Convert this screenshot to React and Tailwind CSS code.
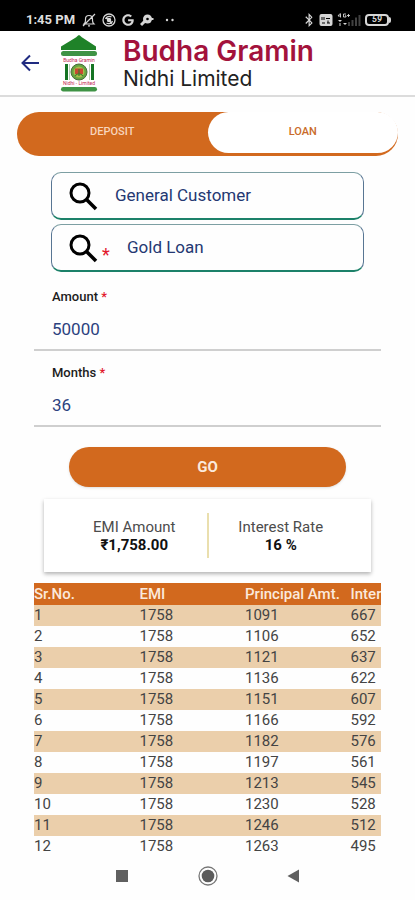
import { useState } from 'react'
import { FaBluetoothB, FaGoogle } from 'react-icons/fa'

const schedule = [
  [1, 1758, 1091, 667],
  [2, 1758, 1106, 652],
  [3, 1758, 1121, 637],
  [4, 1758, 1136, 622],
  [5, 1758, 1151, 607],
  [6, 1758, 1166, 592],
  [7, 1758, 1182, 576],
  [8, 1758, 1197, 561],
  [9, 1758, 1213, 545],
  [10, 1758, 1230, 528],
  [11, 1758, 1246, 512],
  [12, 1758, 1263, 495],
]

const StatusBar = () => (
  <div className="flex h-[31px] shrink-0 items-center bg-black px-6 pt-2 text-[#d6d6d6]">
    <span className="w-[58px] pl-0.5 text-[13px] font-bold whitespace-nowrap text-[#dedede]">1:45 PM</span>
    <div className="flex flex-1 items-center gap-1.5">
      {/* muted bell */}
      <svg className="h-3.5 w-3.5" viewBox="0 0 14 14" fill="none" stroke="currentColor" strokeWidth="1.2">
        <path d="M2 11h10c-1-1-1.500-2-1.500-3.500V6A3.500 3.500 0 0 0 7 2.500 3.500 3.500 0 0 0 3.500 6v1.500C3.500 9 3 10 2 11ZM6 12.800h2M1 13 13 1" />
      </svg>
      {/* aperture style app icon */}
      <svg className="h-3.5 w-3.5" viewBox="0 0 14 14" fill="none" stroke="currentColor" strokeWidth="1.3">
        <circle cx="7" cy="7" r="6" />
        <path d="M3.500 6A4 4 0 0 1 9.500 4M4 4.500l6 6M10.500 8a4 4 0 0 1-6 2" />
        <circle cx="7" cy="7" r="1.600" fill="currentColor" />
      </svg>
      <FaGoogle className="h-3 w-3" />
      <svg className="h-3.5 w-3.5" viewBox="0 0 14 14">
        <circle cx="7.500" cy="6" r="4.500" fill="currentColor" />
        <path d="m5 8-4 4" stroke="currentColor" strokeWidth="3" />
        <path d="M11 6h2.500" stroke="currentColor" strokeWidth="2" />
        <circle cx="7.500" cy="6" r="1.300" fill="#000" />
      </svg>
      <svg className="ml-1 h-1 w-3" viewBox="0 0 12 4" fill="currentColor">
        <circle cx="3" cy="2" r="1.200" />
        <circle cx="8.500" cy="2" r="1.200" />
      </svg>
    </div>
    <div className="flex items-center gap-1">
      <FaBluetoothB className="h-3.5 w-3" />
      <svg className="h-3 w-3.5" viewBox="0 0 14 12">
        <rect width="13" height="12" x=".5" rx="2" fill="currentColor" />
        <path d="M3 3v3M5 3v3M7 4.500h4M3 9h3M8 9h3M9 6.500V9" stroke="#000" strokeWidth="1" />
      </svg>
      {/* 4G+ signal */}
      <svg className="h-3.5 w-6" viewBox="0 0 24 14" fill="currentColor">
        <path d="M3 .5 1 3h3M3.500.5v4M9 1H6.500v3H9V2.800H8M10 2.500h3M11.500 1v3" fill="none" stroke="currentColor" strokeWidth=".9" />
        <path d="M1 7h4l-2 2zM6 10h4l-2 2z" />
        <path d="M2 10h2v3H2z" opacity=".5" />
        <path d="M11 9h2v4h-2zM14.500 7h2v6h-2zM18 4.500h2V13h-2zM21.500 2h2v11h-2z" opacity=".3" />
      </svg>
      <div className="flex items-center">
        <span className="flex h-3 w-6 items-center justify-center rounded-sm border-2 border-[#d6d6d6] text-[9px] leading-none font-bold italic">59</span>
        <span className="h-1.5 w-0.5 rounded-r bg-[#d6d6d6]" />
      </div>
    </div>
  </div>
)

const Logo = () => (
  <svg className="h-[58px] w-[38px]" viewBox="0 0 38 58">
    <path d="M19 1c2 1 2 2 4 3l13 8.500V16H1v-3.500L15 4c2-1 2-2 4-3Z" fill="#1f8228" />
    <rect x="1" y="17" width="36" height="5" rx="2.500" fill="#3f9345" />
    <rect x="1" y="53" width="36" height="4.500" rx="2.200" fill="#3f9345" />
    <path d="M5 30h3v16H5zM31 30h3v16h-3z" fill="#157423" />
    <path d="M9.500 30v16M29.500 30v16" stroke="#b8cdb6" strokeWidth="1" />
    <circle cx="19" cy="38" r="8" fill="#65a541" stroke="#496d3a" strokeWidth="1" />
    <circle cx="19" cy="38" r="5.500" fill="#a6bd4b" />
    <path d="M15 34.500h8V40h-8z" fill="#c94932" />
    <path d="M15 42c2-3 6-3 8 0M19 35v7" fill="none" stroke="#3e7b2c" strokeWidth="1.200" />
    <text x="19" y="28" textAnchor="middle" fontSize="5" fill="#c3264f">Budha Gramin</text>
    <text x="19" y="51" textAnchor="middle" fontSize="5" fill="#c3264f">Nidhi - Limited</text>
  </svg>
)

const SearchField = ({ id, label, value, required }) => (
  <div className="flex h-12 items-center rounded-[10px] border border-b-2 border-x-[#587693] border-t-[#7d9fa3] border-b-[#1c8169] pl-4">
    <label htmlFor={id} aria-label={label} className="flex items-end">
      <svg className="h-[30px] w-[30px]" viewBox="0 0 30 30" fill="none" stroke="#000" strokeWidth="3">
        <circle cx="12" cy="12" r="9" />
        <path d="m18 18 10 10" strokeWidth="3.500" />
      </svg>
      {required && <span className="w-3 pl-1 text-lg leading-4 text-[#e2182c]">*</span>}
    </label>
    <input
      id={id}
      defaultValue={value}
      className="ml-[17px] w-full min-w-0 bg-transparent text-[17px] text-[#243872] outline-none"
    />
  </div>
)

const NumberField = ({ id, label, value }) => (
  <div className="flex h-[76px] flex-col border-b-2 border-[#cfcfcf] px-[18px]">
    <label htmlFor={id} className="mt-3 text-[13px] leading-5 font-medium text-[#1c1c1c]">
      {label} <span className="text-[#e2182c]">*</span>
    </label>
    <input
      id={id}
      inputMode="numeric"
      defaultValue={value}
      className="mt-2 h-7 w-full bg-transparent text-[17px] text-[#2c427e] outline-none"
    />
  </div>
)

const Summary = ({ title, value }) => (
  <div className="flex-1 text-center text-[15px] leading-[18px]">
    <p className="text-[#4c4c4c]">{title}</p>
    <p className="font-bold text-[#111]">{value}</p>
  </div>
)

function App() {
  const [tab, setTab] = useState('loan')

  const tabClass = (name) =>
    tab === name
      ? 'flex-1 rounded-full bg-white text-[#c96b2a]'
      : 'flex-1 rounded-full text-[#f8d5bd]'

  return (
    <div className="flex h-screen flex-col overflow-hidden bg-[#fefefe] font-['Roboto',sans-serif]">
      <StatusBar />

      <header className="flex h-[66px] shrink-0 items-center border-b-2 border-[#dcdcdc] bg-white pl-[21px]">
        <button aria-label="Back" className="mr-[21px]">
          <svg className="h-[18px] w-[18px]" viewBox="0 0 18 18" fill="none" stroke="#202b81" strokeWidth="2">
            <path d="M9 1.500 1.500 9 9 16.500M2 9h16" />
          </svg>
        </button>
        <Logo />
        <div className="ml-[25px] font-['Inter',sans-serif]">
          <h1 className="text-[28px] leading-8 font-semibold text-[#a3123c]">Budha Gramin</h1>
          <p className="text-[21px] leading-6 text-[#222]">Nidhi Limited</p>
        </div>
      </header>

      <main className="flex-1 overflow-hidden pt-[15px]">
        {/* Deposit / Loan switch */}
        <div className="mx-[17px] flex h-11 rounded-full bg-[#d2691e] pb-[3px] text-[11px] font-medium">
          <button className={tabClass('deposit')} onClick={() => setTab('deposit')}>DEPOSIT</button>
          <button className={tabClass('loan')} onClick={() => setTab('loan')}>LOAN</button>
        </div>

        <div className="mx-[51px] mt-4 flex flex-col gap-1">
          <SearchField id="customer" label="Customer type" value="General Customer" />
          <SearchField id="scheme" label="Loan type" value="Gold Loan" required />
        </div>

        <div className="mx-[34px] mt-[3px]">
          <NumberField id="amount" label="Amount" value="50000" />
          <NumberField id="months" label="Months" value="36" />
        </div>

        <div className="mx-[69px] mt-5">
          <button className="h-10 w-full rounded-full bg-[#d2691e] text-[15px] font-bold text-[#fbe9dc] shadow">GO</button>
        </div>

        <section className="mx-11 mt-3 flex h-[73px] items-center bg-white px-[18px] shadow-[0_2px_4px_rgba(0,0,0,0.3)]">
          <Summary title="EMI Amount" value="₹1,758.00" />
          <span className="h-[45px] w-0.5 bg-[#eadfae]" />
          <Summary title="Interest Rate" value="16 %" />
        </section>

        {/* Repayment schedule, scrolls sideways */}
        <div className="mx-[34px] mt-[11px] overflow-hidden">
          <table className="w-[422px] table-fixed text-left text-[15px] leading-[21px] text-[#444]">
            <thead className="bg-[#d2691e] leading-[22px] text-[#fbe9dc]">
              <tr>
                <th className="p-0 font-medium">Sr.No.</th>
                <th className="p-0 font-medium">EMI</th>
                <th className="p-0 font-medium whitespace-nowrap">Principal Amt.</th>
                <th className="p-0 font-medium whitespace-nowrap">Interest Amt.</th>
              </tr>
            </thead>
            <tbody>
              {schedule.map((row) => (
                <tr key={row[0]} className="odd:bg-[#ebcfab]">
                  {row.map((cell, i) => (
                    <td key={i} className="p-0">{cell}</td>
                  ))}
                </tr>
              ))}
            </tbody>
          </table>
        </div>
      </main>

      <nav className="flex h-[49px] shrink-0 items-center justify-center gap-[66px] bg-[#fefefe]">
        <button aria-label="Recent apps">
          <svg className="h-5 w-5" viewBox="0 0 20 20"><path d="M4 4h12v12H4z" fill="#606060" /></svg>
        </button>
        <button aria-label="Home">
          <svg className="h-5 w-5" viewBox="0 0 20 20">
            <circle cx="10" cy="10" r="9" fill="none" stroke="#777" strokeWidth="1.300" />
            <circle cx="10" cy="10" r="6.300" fill="#5c5c5c" />
          </svg>
        </button>
        <button aria-label="Back to previous app">
          <svg className="h-5 w-5" viewBox="0 0 20 20"><path d="M15 3.500v13L3.500 10z" fill="#606060" /></svg>
        </button>
      </nav>
    </div>
  )
}

export default App
